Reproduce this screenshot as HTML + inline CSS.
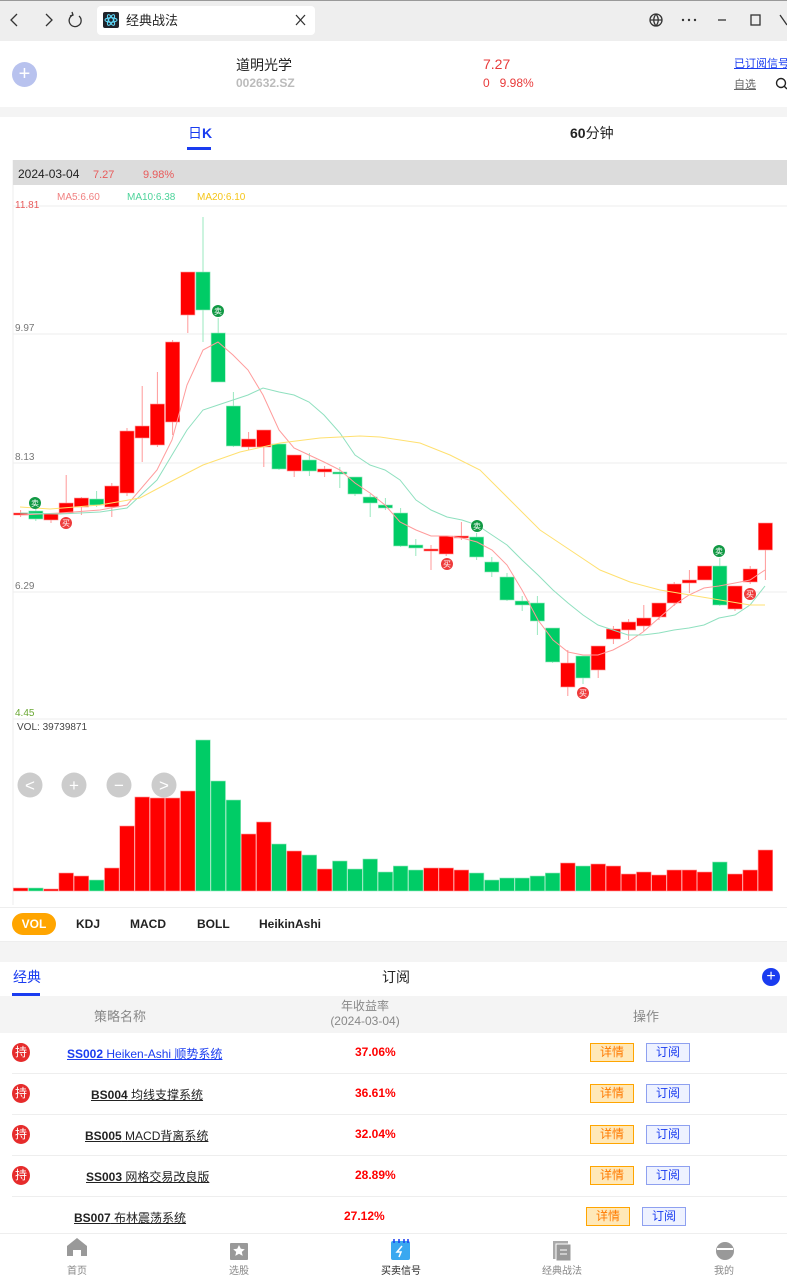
<!DOCTYPE html><html><head><meta charset="utf-8"><style>
*{margin:0;padding:0;box-sizing:border-box}
body{width:787px;height:1280px;overflow:hidden;background:#fff;font-family:"Liberation Sans","Noto Sans CJK SC",sans-serif;position:relative}
.a{position:absolute}
</style></head><body>
<div class="a" style="left:0;top:0;width:787px;height:41px;background:#eeeeee;border-top:1px solid #999"></div>
<div class="a" style="left:97px;top:6px;width:218px;height:29px;background:#fff;border-radius:4px"></div>
<svg class="a" style="left:0;top:0" width="787" height="41">
<g fill="none" stroke="#333" stroke-width="1.3">
<path d="M17 14l-6 6 6 6"/><path d="M46 14l6 6-6 6"/>
<path d="M79 16a6 6 0 1 1-6 -1"/><path d="M72 12l1 3-3 1"/>
<path d="M296 15l9 10M305 15l-9 10"/>
<circle cx="656" cy="20" r="6"/><path d="M650 20h12M656 14c-3 4-3 8 0 12M656 14c3 4 3 8 0 12"/>
<path d="M718 20h8"/><rect x="751" y="15" width="9" height="10"/><path d="M780 15l7 10"/>
</g>
<g fill="#333"><circle cx="683" cy="20" r="1.2"/><circle cx="689" cy="20" r="1.2"/><circle cx="695" cy="20" r="1.2"/></g>
<rect x="103" y="12" width="16" height="16" rx="2" fill="#20232a"/>
<g fill="none" stroke="#61dafb" stroke-width="1"><ellipse cx="111" cy="20" rx="6" ry="2.3"/><ellipse cx="111" cy="20" rx="6" ry="2.3" transform="rotate(60 111 20)"/><ellipse cx="111" cy="20" rx="6" ry="2.3" transform="rotate(-60 111 20)"/></g>
<text x="126" y="25" font-size="13" fill="#222">经典战法</text>
</svg>
<div class="a" style="left:12px;top:62px;width:25px;height:25px;border-radius:50%;background:#b8c2ee;color:#fff;font-size:20px;line-height:24px;text-align:center">+</div>
<div class="a" style="left:236px;top:55px;font-size:14px;color:#222">道明光学</div>
<div class="a" style="left:236px;top:76px;font-size:12px;color:#bbb;font-weight:bold">002632.SZ</div>
<div class="a" style="left:483px;top:56px;font-size:14px;color:#e83a3a">7.27</div>
<div class="a" style="left:483px;top:76px;font-size:12px;color:#e83a3a">0&nbsp;&nbsp;&nbsp;9.98%</div>
<div class="a" style="left:734px;top:55px;font-size:11px;color:#1a3cf0;text-decoration:underline;white-space:nowrap">已订阅信号</div>
<div class="a" style="left:734px;top:76px;font-size:11px;color:#666;text-decoration:underline">自选</div>
<svg class="a" style="left:774px;top:76px" width="13" height="14"><circle cx="7" cy="7" r="4.5" fill="none" stroke="#222" stroke-width="1.4"/><path d="M10 10l3 3" stroke="#222" stroke-width="1.4"/></svg>
<div class="a" style="left:0;top:107px;width:787px;height:10px;background:#f4f4f4"></div>
<div class="a" style="left:188px;top:123px;font-size:14px;color:#1a3cf0">日<b>K</b></div>
<div class="a" style="left:187px;top:147px;width:24px;height:3px;background:#1a3cf0"></div>
<div class="a" style="left:570px;top:123px;font-size:14px;color:#222"><b>60</b>分钟</div>
<svg class="a" id="ch" style="left:0;top:155px" width="787" height="755"></svg>
<div class="a" style="left:0;top:907px;width:787px;height:1px;background:#eee"></div>
<div class="a" style="left:12px;top:913px;width:44px;height:22px;border-radius:11px;background:#ffa500;color:#fff;font-size:12px;font-weight:bold;line-height:22px;text-align:center">VOL</div>
<div class="a" style="left:76px;top:917px;font-size:12px;font-weight:bold;color:#222">KDJ</div>
<div class="a" style="left:130px;top:917px;font-size:12px;font-weight:bold;color:#222">MACD</div>
<div class="a" style="left:197px;top:917px;font-size:12px;font-weight:bold;color:#222">BOLL</div>
<div class="a" style="left:259px;top:917px;font-size:12px;font-weight:bold;color:#222">HeikinAshi</div>
<div class="a" style="left:0;top:941px;width:787px;height:21px;background:#f4f4f4;border-top:1px solid #eee"></div>
<div class="a" style="left:13px;top:967px;font-size:14px;color:#1a3cf0">经典</div>
<div class="a" style="left:12px;top:993px;width:28px;height:3px;background:#1a3cf0"></div>
<div class="a" style="left:382px;top:967px;font-size:14px;color:#222">订阅</div>
<div class="a" style="left:762px;top:968px;width:18px;height:18px;border-radius:50%;background:#1a3cf0;color:#fff;font-size:16px;line-height:17px;text-align:center">+</div>
<div class="a" style="left:0;top:996px;width:787px;height:37px;background:#f4f4f4"></div>
<div class="a" style="left:94px;top:1006px;font-size:13px;color:#888">策略名称</div>
<div class="a" style="left:310px;top:999px;width:110px;font-size:12px;color:#888;text-align:center;line-height:15px">年收益率<br>(2024-03-04)</div>
<div class="a" style="left:633px;top:1006px;font-size:13px;color:#888">操作</div>
<div id="rows"></div>
<div class="a" style="left:0;top:1233px;width:787px;height:47px;background:#fff;border-top:1px solid #eee"></div>
<svg class="a" style="left:0;top:1233px" width="787" height="47">
<path d="M67 13l10-8 10 8v10h-6v-6h-8v6h-6z" fill="#999"/>
<rect x="230" y="10" width="18" height="17" rx="1" fill="#999"/><path d="M239 12l1.8 3.8 4 .4-3 2.7.9 4-3.7-2.1-3.7 2.1.9-4-3-2.7 4-.4z" fill="#fff"/>
<rect x="391" y="8" width="19" height="19" rx="2" fill="#3aa8f0"/><path d="M394 6v4M399 6v4M404 6v4M408 6v4" stroke="#1a3cf0" stroke-width="1.5"/><path d="M402 13l-5 6h4l-2 5" stroke="#fff" stroke-width="1.5" fill="none"/>
<rect x="553" y="8" width="15" height="18" fill="#aaa"/><rect x="556" y="11" width="15" height="17" fill="#999" stroke="#fff"/><path d="M560 17h7M560 21h7" stroke="#fff"/>
<circle cx="725" cy="18" r="9" fill="#999"/><path d="M717 16h16" stroke="#fff" stroke-width="2"/>
<g font-size="10" fill="#888" text-anchor="middle"><text x="77" y="41">首页</text><text x="239" y="41">选股</text><text x="401" y="41" fill="#222">买卖信号</text><text x="562" y="41">经典战法</text><text x="724" y="41">我的</text></g>
</svg>
<script>
var rows=[["SS002 Heiken-Ashi 顺势系统","37.06%",1,"#1a3cf0",67],["BS004 均线支撑系统","36.61%",1,"#222",91],["BS005 MACD背离系统","32.04%",1,"#222",85],["SS003 网格交易改良版","28.89%",1,"#222",86],["BS007 布林震荡系统","27.12%",0,"#222",74]];
var h='';rows.forEach(function(r,i){var y=1033+i*41;var off=r[2]?0:-4;
if(r[2])h+='<div class="a" style="left:12px;top:'+(y+10)+'px;width:18px;height:19px;border-radius:50%;background:#e62b2b;color:#fff;font-size:12px;line-height:19px;text-align:center">持</div>';
var p=r[0].split(' ');var code=p[0],rest=r[0].slice(code.length);
h+='<div class="a" style="left:'+r[4]+'px;top:'+(y+12)+'px;font-size:12px;color:'+r[3]+';text-decoration:underline;white-space:nowrap"><b>'+code+'</b>'+rest+'</div>';
h+='<div class="a" style="left:'+(r[2]?355:344)+'px;top:'+(y+12)+'px;font-size:12px;color:#f00;font-weight:bold">'+r[1]+'</div>';
h+='<div class="a" style="left:'+(590+off)+'px;top:'+(y+10)+'px;width:44px;height:19px;background:#ffe8b8;border:1px solid #ffa500;color:#ff7a00;font-size:12px;line-height:17px;text-align:center">详情</div>';
h+='<div class="a" style="left:'+(646+off)+'px;top:'+(y+10)+'px;width:44px;height:19px;background:#eef2ff;border:1px solid #8ea0f0;color:#1a3cf0;font-size:12px;line-height:17px;text-align:center">订阅</div>';
if(i<4)h+='<div class="a" style="left:12px;top:'+(y+40)+'px;width:775px;height:1px;background:#eee"></div>';});
document.getElementById('rows').innerHTML=h;
var O=155;
var c=[[513,513,510,517,1],[511,519,509,521,0],[514,520,513,523,1],[503,513,475,514,1],[498,507,497,515,1],[499,505,491,507,0],[486,507,483,517,1],[431,493,428,496,1],[426,438,386,462,1],[404,445,372,447,1],[342,422,340,435,1],[272,315,272,333,1],[272,310,217,342,0],[333,382,318,382,0],[406,446,392,447,0],[439,447,432,450,1],[430,447,430,467,1],[444,469,444,470,0],[455,471,455,477,1],[460,471,453,476,0],[469,472,466,477,1],[472,474,467,488,0],[477,494,477,496,0],[497,503,494,517,0],[505,508,498,510,0],[513,546,508,547,0],[545,548,539,556,0],[549,551,545,570,1],[536,554,536,556,1],[536,538,522,540,1],[537,557,533,560,0],[562,572,557,577,0],[577,600,573,601,0],[601,605,596,611,0],[603,621,596,635,0],[628,662,628,663,0],[663,687,650,696,1],[656,678,656,684,0],[646,670,646,678,1],[629,639,626,644,1],[622,630,619,640,1],[618,626,605,631,1],[603,617,603,620,1],[584,603,582,606,1],[580,583,570,593,1],[566,580,566,580,1],[566,605,558,606,0],[586,609,586,611,1],[569,582,566,584,1],[523,550,523,580,1]];
var v=[888,888,889,873,876,880,868,826,797,798,798,791,740,781,800,834,822,844,851,855,869,861,869,859,872,866,870,868,868,870,873,880,878,878,876,873,863,866,864,866,874,872,875,870,870,872,862,874,870,850];
var s='<line x1="13" y1="5" x2="13" y2="750" stroke="#eee"/><rect x="13" y="5" width="774" height="25" fill="#dcdcdc"/>';
s+='<text x="18" y="23" font-size="12" fill="#222">2024-03-04</text><text x="93" y="23" font-size="11" fill="#e85a5a">7.27</text><text x="143" y="23" font-size="11" fill="#e85a5a">9.98%</text>';
s+='<text x="57" y="45" font-size="10" fill="#f08080">MA5:6.60</text><text x="127" y="45" font-size="10" fill="#4cd39a">MA10:6.38</text><text x="197" y="45" font-size="10" fill="#f5c518">MA20:6.10</text>';
[[206,'11.81','#e85a5a'],[334,'9.97','#777'],[463,'8.13','#777'],[592,'6.29','#777'],[719,'4.45','#6aa833']].forEach(function(g){s+='<line x1="13" x2="787" y1="'+(g[0]-O)+'" y2="'+(g[0]-O)+'" stroke="#eee"/><text x="15" y="'+(g[0]-O-(g[1]=='11.81'?-2:3))+'" font-size="10" fill="'+g[2]+'">'+g[1]+'</text>';});
s+='<text x="17" y="'+(730-O)+'" font-size="10" fill="#444">VOL: 39739871</text>';
for(var i=0;i<50;i++){var x=13+15.2*i,cx=x+7.6,d=c[i],col=d[4]?'#ff0000':'#00cc66',lc=d[4]?'#ff9999':'#99e8bf';
s+='<line x1="'+cx+'" x2="'+cx+'" y1="'+(d[2]-O)+'" y2="'+(d[3]-O)+'" stroke="'+lc+'"/>';
var t=Math.min(d[0],d[1]),hh=Math.max(2,Math.abs(d[1]-d[0]));
s+='<rect x="'+(x+0.5)+'" y="'+(t-O)+'" width="14.2" height="'+hh+'" fill="'+col+'" stroke="'+lc+'" stroke-width="0.6"/>';
s+='<rect x="'+(x+0.3)+'" y="'+(v[i]-O)+'" width="14.6" height="'+(891-v[i])+'" fill="'+col+'" stroke="'+lc+'" stroke-width="0.6"/>';}
function pl(p,col){return '<polyline fill="none" stroke="'+col+'" stroke-width="1" points="'+p.map(function(q){return q[0]+','+(q[1]-O)}).join(' ')+'"/>';}
s+=pl([[20,515],[60,513],[100,510],[127,505],[157,470],[172,440],[187,385],[203,350],[218,342],[233,355],[248,370],[263,395],[279,430],[294,448],[309,455],[324,462],[340,470],[355,483],[370,493],[385,505],[400,522],[416,530],[431,536],[447,536],[462,538],[477,542],[492,550],[507,565],[522,590],[538,620],[553,640],[568,652],[583,655],[598,655],[613,650],[628,642],[643,632],[659,618],[674,605],[689,595],[704,588],[719,586],[735,583],[750,580],[765,570]],'#ff9b9b');
s+=pl([[20,513],[60,514],[100,512],[127,508],[157,480],[172,455],[187,430],[203,410],[218,405],[248,395],[263,388],[279,392],[294,395],[309,402],[324,415],[340,433],[355,455],[370,465],[385,470],[400,480],[416,500],[431,510],[447,517],[462,520],[477,525],[492,535],[507,545],[522,560],[538,575],[553,590],[568,603],[583,615],[598,625],[613,630],[628,635],[643,635],[659,633],[674,630],[689,628],[704,625],[719,618],[735,615],[750,605],[765,586]],'#8fe0bf');
s+=pl([[20,507],[50,509],[100,505],[140,498],[170,482],[203,465],[240,452],[280,443],[320,438],[360,436],[380,437],[420,443],[450,455],[480,470],[510,500],[540,530],[570,550],[600,570],[630,582],[660,590],[690,595],[720,600],[750,605],[765,605]],'#ffe070');
[[35,503,0],[66,523,1],[218,311,0],[477,526,0],[447,564,1],[583,693,1],[719,551,0],[750,594,1]].forEach(function(m){s+='<circle cx="'+m[0]+'" cy="'+(m[1]-O)+'" r="6" fill="'+(m[2]?'#ee3b3b':'#119944')+'"/><text x="'+m[0]+'" y="'+(m[1]-O+3)+'" font-size="8" fill="#fff" text-anchor="middle">'+(m[2]?'买':'卖')+'</text>';});
[[30,'<'],[74,'+'],[119,'−'],[164,'>']].forEach(function(b){s+='<circle cx="'+b[0]+'" cy="'+(785-O)+'" r="12.5" fill="#ccc"/><text x="'+b[0]+'" y="'+(791-O)+'" font-size="17" fill="#fff" text-anchor="middle">'+b[1].replace('<','&lt;').replace('>','&gt;')+'</text>';});
document.getElementById('ch').innerHTML=s;
</script>
</body></html>
